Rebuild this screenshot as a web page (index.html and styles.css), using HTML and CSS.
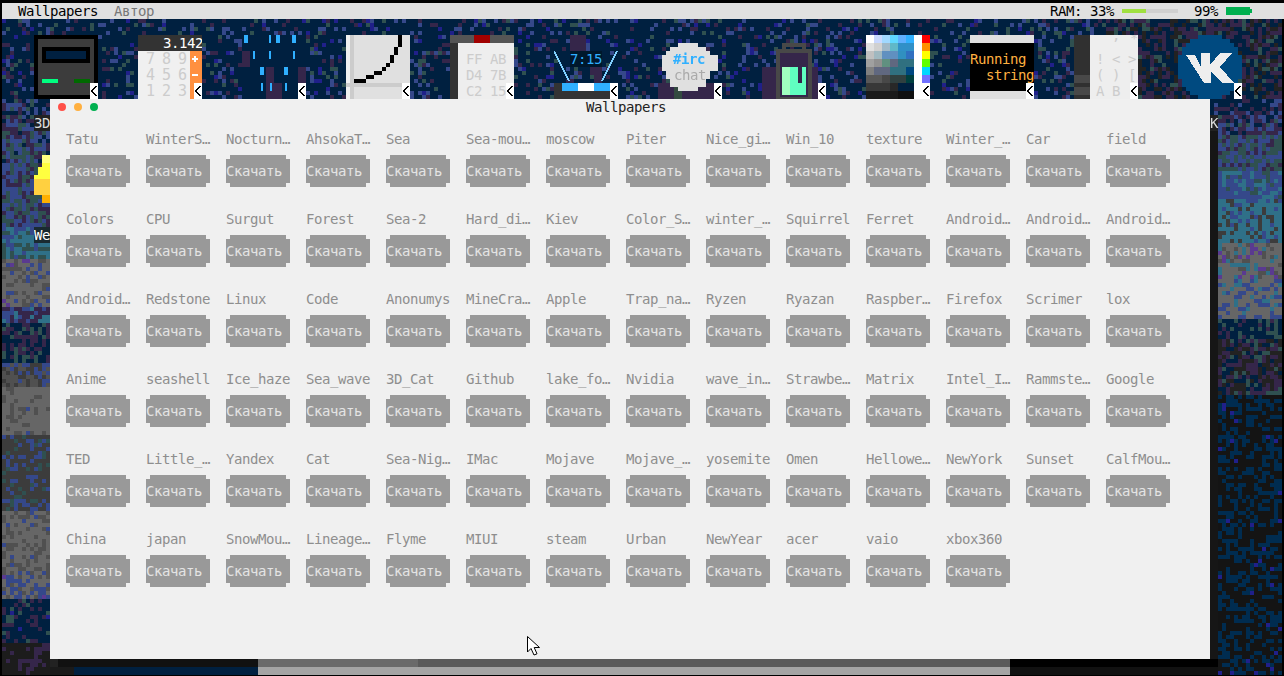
FILE: index.html
```html
<!DOCTYPE html>
<html lang="en">

<head>
    <meta charset="UTF-8">
    <meta name="viewport" content="width=device-width, initial-scale=1.0">
    <title>Wallpapers</title>
    <link rel="stylesheet" href="styles.css">
</head>

<body>
    <canvas id="wall" class="wall" width="1284" height="676"></canvas>

    <svg class="defs" width="0" height="0">
        <symbol id="back" viewBox="0 0 8 16" width="8" height="16">
            <rect width="8" height="16" fill="#fff" />
            <path d="M6.5 3 L1.8 8 L6.5 13" fill="none" stroke="#000" stroke-width="1.6" />
        </symbol>
    </svg>

    <header class="menubar">
        <span class="menu-app">Wallpapers</span>
        <span class="menu-item">Автор</span>
        <div class="status">
            <span>RAM: 33%</span>
            <div class="ram-bar"><div class="ram-fill"></div></div>
            <span class="bat-text">99%</span>
            <div class="battery"></div>
        </div>
    </header>

    <main class="desktop">
        <div class="app">
            <svg class="icon" viewBox="0 0 64 64">
                <rect width="64" height="64" fill="#000" />
                <rect x="4" y="4" width="56" height="56" fill="#3c3c3c" />
                <rect x="8" y="12" width="48" height="16" fill="#000" />
                <rect x="12" y="16" width="40" height="8" fill="#002040" />
                <rect x="8" y="44" width="16" height="4" fill="#00ff80" />
                <rect x="40" y="44" width="16" height="4" fill="#006a00" />
                <use href="#back" x="56" y="48" />
            </svg>
            <span class="label">3D</span>
        </div>
        <div class="app">
            <svg class="icon" viewBox="0 0 64 64">
                <rect width="64" height="16" fill="#333" />
                <rect y="16" width="64" height="48" fill="#f0f0f0" />
                <rect x="52" y="16" width="12" height="48" fill="#ff9040" />
                <text class="svg-text" x="25" y="13" fill="#fff">3.142</text>
                <g class="svg-big" fill="#ccc">
                    <text x="8" y="29">7</text><text x="24" y="29">8</text><text x="40" y="29">9</text>
                    <text x="8" y="45">4</text><text x="24" y="45">5</text><text x="40" y="45">6</text>
                    <text x="8" y="61">1</text><text x="24" y="61">2</text><text x="40" y="61">3</text>
                </g>
                <rect x="54" y="23" width="6" height="2" fill="#fff" />
                <rect x="56" y="21" width="2" height="6" fill="#fff" />
                <rect x="54" y="39" width="6" height="2" fill="#fff" />
                <use href="#back" x="56" y="48" />
            </svg>
        </div>
        <div class="app">
            <svg class="icon" viewBox="0 0 64 64">
                <rect width="64" height="64" fill="#002040" />
                <g fill="#35264a">
                    <rect x="0" y="16" width="8" height="16" />
                    <rect x="24" y="32" width="8" height="32" />
                    <rect x="32" y="48" width="8" height="16" />
                    <rect x="56" y="32" width="8" height="16" />
                </g>
                <g fill="#30b0ff">
                    <rect x="2" y="0" width="4" height="8" /><rect x="27" y="0" width="2" height="8" />
                    <rect x="34" y="0" width="4" height="8" /><rect x="50" y="0" width="4" height="8" />
                    <rect x="11" y="16" width="2" height="8" /><rect x="27" y="16" width="2" height="8" />
                    <rect x="51" y="16" width="2" height="8" />
                    <rect x="18" y="32" width="4" height="8" /><rect x="42" y="32" width="4" height="8" />
                    <rect x="19" y="48" width="2" height="8" /><rect x="28" y="48" width="2" height="8" />
                    <rect x="43" y="48" width="2" height="8" />
                </g>
                <use href="#back" x="56" y="48" />
            </svg>
        </div>
        <div class="app">
            <svg class="icon" viewBox="0 0 64 64">
                <rect width="64" height="64" fill="#e0e0e0" />
                <rect width="4" height="64" fill="#f0f0f0" />
                <rect x="4" width="4" height="64" fill="#ccc" />
                <rect y="48" width="64" height="4" fill="#ccc" />
                <path fill="#000" d="M8 44h12v4h-12z M20 40h8v4h-8z M28 36h8v4h-8z M36 32h4v4h-4z M40 28h4v4h-4z M44 20h4v8h-4z M48 12h4v8h-4z M52 0h4v12h-4z" />
                <use href="#back" x="56" y="48" />
            </svg>
        </div>
        <div class="app">
            <svg class="icon" viewBox="0 0 64 64">
                <rect width="64" height="8" fill="#555" />
                <rect x="24" width="16" height="8" fill="#a00000" />
                <rect y="8" width="8" height="56" fill="#333" />
                <rect x="8" y="8" width="56" height="56" fill="#eee" />
                <g class="svg-text" fill="#ccc">
                    <text x="16" y="29">FF</text><text x="40" y="29">AB</text>
                    <text x="16" y="45">D4</text><text x="40" y="45">7B</text>
                    <text x="16" y="61">C2</text><text x="40" y="61">15</text>
                </g>
                <use href="#back" x="56" y="48" />
            </svg>
        </div>
        <div class="app">
            <svg class="icon" viewBox="0 0 64 64">
                <rect x="16" width="16" height="16" fill="#35264a" />
                <rect x="40" y="16" width="8" height="32" fill="#35264a" />
                <rect x="16" y="16" width="32" height="16" fill="#00182c" />
                <path d="M0 16 L15 46 M63 16 L48 46" fill="none" stroke="#80d0ff" stroke-width="1.5" />
                <text class="svg-text" x="16" y="29" fill="#30b0ff">7:15</text>
                <rect y="48" width="64" height="16" fill="#333" />
                <rect x="8" y="48" width="16" height="8" fill="#30b0ff" />
                <rect x="24" y="48" width="16" height="8" fill="#fff" />
                <rect x="40" y="48" width="16" height="8" fill="#30b0ff" />
                <use href="#back" x="56" y="48" />
            </svg>
        </div>
        <div class="app">
            <svg class="icon" viewBox="0 0 64 64">
                <rect y="48" width="64" height="16" fill="#35264a" />
                <rect x="16" y="52" width="8" height="12" fill="#334a40" />
                <path fill="#e0e0e0" d="M20 8H40V12H48V16H52V20H60V36H52V44H48V52H40V56H20V52H12V44H8V36H4V20H8V16H12V12H20Z" />
                <text class="svg-text svg-bold" x="15" y="29" fill="#30b0ff">#irc</text>
                <text class="svg-text" x="16" y="45" fill="#aaa">chat</text>
                <use href="#back" x="56" y="48" />
            </svg>
        </div>
        <div class="app">
            <svg class="icon" viewBox="0 0 64 64">
                <rect y="32" width="56" height="32" fill="#35264a" />
                <rect x="16" y="16" width="32" height="48" fill="#35264a" stroke="#484848" stroke-width="4" />
                <path d="M22 16 V10 H42 V16" fill="none" stroke="#484848" stroke-width="4" />
                <rect x="20" y="32" width="8" height="28" fill="#a0ffc0" />
                <rect x="28" y="32" width="16" height="28" fill="#60ffc0" />
                <rect x="36" y="32" width="4" height="16" fill="#35264a" />
                <use href="#back" x="56" y="48" />
            </svg>
        </div>
        <div class="app">
            <svg class="icon" viewBox="0 0 64 64">
                <rect width="64" height="64" fill="#fff" />
                <g>
                    <rect x="0" y="0" width="8" height="8" fill="#fff" /><rect x="8" y="0" width="8" height="8" fill="#c8d8ff" /><rect x="16" y="0" width="8" height="8" fill="#a0d8ff" /><rect x="24" y="0" width="8" height="8" fill="#60d8ff" /><rect x="32" y="0" width="8" height="8" fill="#60b0ff" /><rect x="40" y="0" width="8" height="8" fill="#30b0ff" />
                    <rect x="0" y="8" width="8" height="8" fill="#e0e0e0" /><rect x="8" y="8" width="8" height="8" fill="#d0d0d0" /><rect x="16" y="8" width="8" height="8" fill="#a0b8c8" /><rect x="24" y="8" width="8" height="8" fill="#60b8c8" /><rect x="32" y="8" width="16" height="8" fill="#3090c8" />
                    <rect x="0" y="16" width="8" height="8" fill="#c0c0c0" /><rect x="8" y="16" width="8" height="8" fill="#a0b8c0" /><rect x="16" y="16" width="16" height="8" fill="#6090c0" /><rect x="32" y="16" width="8" height="8" fill="#3090c0" /><rect x="40" y="16" width="8" height="8" fill="#3070c0" />
                    <rect x="0" y="24" width="8" height="8" fill="#a0a0a0" /><rect x="8" y="24" width="8" height="8" fill="#909090" /><rect x="16" y="24" width="8" height="8" fill="#609080" /><rect x="24" y="24" width="8" height="8" fill="#606880" /><rect x="32" y="24" width="16" height="8" fill="#307080" />
                    <rect x="0" y="32" width="8" height="8" fill="#808080" /><rect x="8" y="32" width="16" height="8" fill="#606880" /><rect x="24" y="32" width="16" height="8" fill="#307080" /><rect x="40" y="32" width="8" height="8" fill="#004880" />
                    <rect x="0" y="40" width="16" height="8" fill="#585858" /><rect x="16" y="40" width="8" height="8" fill="#484848" /><rect x="24" y="40" width="16" height="8" fill="#304040" /><rect x="40" y="40" width="8" height="8" fill="#004040" />
                    <rect x="0" y="48" width="24" height="8" fill="#383838" /><rect x="24" y="48" width="8" height="8" fill="#282828" /><rect x="32" y="48" width="16" height="8" fill="#002040" />
                    <rect x="0" y="56" width="32" height="8" fill="#1a1a1a" /><rect x="32" y="56" width="16" height="8" fill="#101010" />
                </g>
                <rect x="56" y="0" width="8" height="8" fill="#ff0000" />
                <rect x="56" y="8" width="8" height="8" fill="#ff9000" />
                <rect x="56" y="16" width="8" height="8" fill="#ffff00" />
                <rect x="56" y="24" width="8" height="8" fill="#60ff00" />
                <rect x="56" y="32" width="8" height="8" fill="#00d8ff" />
                <rect x="56" y="40" width="8" height="8" fill="#7070ff" />
                <use href="#back" x="56" y="48" />
            </svg>
        </div>
        <div class="app">
            <svg class="icon" viewBox="0 0 64 64">
                <rect width="64" height="64" fill="#e0e0e0" />
                <rect y="8" width="64" height="48" fill="#000" />
                <text class="svg-text" x="0" y="29" fill="#ffb040">Running</text>
                <text class="svg-text" x="16" y="45" fill="#ffb040">string</text>
                <use href="#back" x="56" y="48" />
            </svg>
        </div>
        <div class="app">
            <svg class="icon" viewBox="0 0 64 64">
                <rect width="16" height="64" fill="#303030" />
                <rect y="40" width="16" height="8" fill="#484848" />
                <rect y="52" width="16" height="8" fill="#484848" />
                <rect x="16" width="48" height="64" fill="#eee" />
                <g class="svg-text" fill="#ccc">
                    <text x="22" y="5">"</text><text x="38" y="5">,</text><text x="56" y="8">*</text>
                    <text x="22" y="29">!</text><text x="38" y="29">&lt;</text><text x="54" y="29">&gt;</text>
                    <text x="22" y="45">(</text><text x="38" y="45">)</text><text x="54" y="45">[</text>
                    <text x="22" y="61">A</text><text x="38" y="61">B</text>
                </g>
                <use href="#back" x="56" y="48" />
            </svg>
        </div>
        <div class="app app-right">
            <svg class="icon" viewBox="0 0 64 64">
                <path fill="#004a80" d="M20 0h24v4h8v4h4v4h4v8h4v24h-4v8h-4v4h-4v4h-8v4h-24v-4h-8v-4h-4v-4h-4v-8h-4v-24h4v-8h4v-4h4v-4h8z" />
                <path fill="#eee" d="M8 20h9l6 12v-14h9v12l10-12h12l-12 14 14 16h-12l-11-12v12h-7l-18-28z" />
                <use href="#back" x="56" y="48" />
            </svg>
            <span class="label">VK</span>
        </div>
        <div class="app">
            <svg class="icon" viewBox="0 0 64 64">
                <path fill="#ffff40" d="M8 8h48v4h4v12h4v16h-64v-20h4v-8h4z" />
                <rect x="8" width="48" height="8" fill="#ffff80" />
                <rect y="24" width="64" height="16" fill="#ffd040" />
                <rect x="8" y="40" width="48" height="8" fill="#ffb000" />
            </svg>
            <span class="label label-plain">We</span>
        </div>
    </main>

    <section class="window">
        <div class="titlebar">
            <div class="lights">
                <span class="light light-red"></span>
                <span class="light light-yellow"></span>
                <span class="light light-green"></span>
            </div>
            <span class="title">Wallpapers</span>
        </div>
        <div class="list">
            <div class="item"><span class="name">Tatu</span><button class="dl">Скачать</button></div>
            <div class="item"><span class="name">WinterS…</span><button class="dl">Скачать</button></div>
            <div class="item"><span class="name">Nocturn…</span><button class="dl">Скачать</button></div>
            <div class="item"><span class="name">AhsokaT…</span><button class="dl">Скачать</button></div>
            <div class="item"><span class="name">Sea</span><button class="dl">Скачать</button></div>
            <div class="item"><span class="name">Sea-mou…</span><button class="dl">Скачать</button></div>
            <div class="item"><span class="name">moscow</span><button class="dl">Скачать</button></div>
            <div class="item"><span class="name">Piter</span><button class="dl">Скачать</button></div>
            <div class="item"><span class="name">Nice_gi…</span><button class="dl">Скачать</button></div>
            <div class="item"><span class="name">Win_10</span><button class="dl">Скачать</button></div>
            <div class="item"><span class="name">texture</span><button class="dl">Скачать</button></div>
            <div class="item"><span class="name">Winter_…</span><button class="dl">Скачать</button></div>
            <div class="item"><span class="name">Car</span><button class="dl">Скачать</button></div>
            <div class="item"><span class="name">field</span><button class="dl">Скачать</button></div>

            <div class="item"><span class="name">Colors</span><button class="dl">Скачать</button></div>
            <div class="item"><span class="name">CPU</span><button class="dl">Скачать</button></div>
            <div class="item"><span class="name">Surgut</span><button class="dl">Скачать</button></div>
            <div class="item"><span class="name">Forest</span><button class="dl">Скачать</button></div>
            <div class="item"><span class="name">Sea-2</span><button class="dl">Скачать</button></div>
            <div class="item"><span class="name">Hard_di…</span><button class="dl">Скачать</button></div>
            <div class="item"><span class="name">Kiev</span><button class="dl">Скачать</button></div>
            <div class="item"><span class="name">Color_S…</span><button class="dl">Скачать</button></div>
            <div class="item"><span class="name">winter_…</span><button class="dl">Скачать</button></div>
            <div class="item"><span class="name">Squirrel</span><button class="dl">Скачать</button></div>
            <div class="item"><span class="name">Ferret</span><button class="dl">Скачать</button></div>
            <div class="item"><span class="name">Android…</span><button class="dl">Скачать</button></div>
            <div class="item"><span class="name">Android…</span><button class="dl">Скачать</button></div>
            <div class="item"><span class="name">Android…</span><button class="dl">Скачать</button></div>

            <div class="item"><span class="name">Android…</span><button class="dl">Скачать</button></div>
            <div class="item"><span class="name">Redstone</span><button class="dl">Скачать</button></div>
            <div class="item"><span class="name">Linux</span><button class="dl">Скачать</button></div>
            <div class="item"><span class="name">Code</span><button class="dl">Скачать</button></div>
            <div class="item"><span class="name">Anonumys</span><button class="dl">Скачать</button></div>
            <div class="item"><span class="name">MineCra…</span><button class="dl">Скачать</button></div>
            <div class="item"><span class="name">Apple</span><button class="dl">Скачать</button></div>
            <div class="item"><span class="name">Trap_na…</span><button class="dl">Скачать</button></div>
            <div class="item"><span class="name">Ryzen</span><button class="dl">Скачать</button></div>
            <div class="item"><span class="name">Ryazan</span><button class="dl">Скачать</button></div>
            <div class="item"><span class="name">Raspber…</span><button class="dl">Скачать</button></div>
            <div class="item"><span class="name">Firefox</span><button class="dl">Скачать</button></div>
            <div class="item"><span class="name">Scrimer</span><button class="dl">Скачать</button></div>
            <div class="item"><span class="name">lox</span><button class="dl">Скачать</button></div>

            <div class="item"><span class="name">Anime</span><button class="dl">Скачать</button></div>
            <div class="item"><span class="name">seashell</span><button class="dl">Скачать</button></div>
            <div class="item"><span class="name">Ice_haze</span><button class="dl">Скачать</button></div>
            <div class="item"><span class="name">Sea_wave</span><button class="dl">Скачать</button></div>
            <div class="item"><span class="name">3D_Cat</span><button class="dl">Скачать</button></div>
            <div class="item"><span class="name">Github</span><button class="dl">Скачать</button></div>
            <div class="item"><span class="name">lake_fo…</span><button class="dl">Скачать</button></div>
            <div class="item"><span class="name">Nvidia</span><button class="dl">Скачать</button></div>
            <div class="item"><span class="name">wave_in…</span><button class="dl">Скачать</button></div>
            <div class="item"><span class="name">Strawbe…</span><button class="dl">Скачать</button></div>
            <div class="item"><span class="name">Matrix</span><button class="dl">Скачать</button></div>
            <div class="item"><span class="name">Intel_I…</span><button class="dl">Скачать</button></div>
            <div class="item"><span class="name">Rammste…</span><button class="dl">Скачать</button></div>
            <div class="item"><span class="name">Google</span><button class="dl">Скачать</button></div>

            <div class="item"><span class="name">TED</span><button class="dl">Скачать</button></div>
            <div class="item"><span class="name">Little_…</span><button class="dl">Скачать</button></div>
            <div class="item"><span class="name">Yandex</span><button class="dl">Скачать</button></div>
            <div class="item"><span class="name">Cat</span><button class="dl">Скачать</button></div>
            <div class="item"><span class="name">Sea-Nig…</span><button class="dl">Скачать</button></div>
            <div class="item"><span class="name">IMac</span><button class="dl">Скачать</button></div>
            <div class="item"><span class="name">Mojave</span><button class="dl">Скачать</button></div>
            <div class="item"><span class="name">Mojave_…</span><button class="dl">Скачать</button></div>
            <div class="item"><span class="name">yosemite</span><button class="dl">Скачать</button></div>
            <div class="item"><span class="name">Omen</span><button class="dl">Скачать</button></div>
            <div class="item"><span class="name">Hellowe…</span><button class="dl">Скачать</button></div>
            <div class="item"><span class="name">NewYork</span><button class="dl">Скачать</button></div>
            <div class="item"><span class="name">Sunset</span><button class="dl">Скачать</button></div>
            <div class="item"><span class="name">CalfMou…</span><button class="dl">Скачать</button></div>

            <div class="item"><span class="name">China</span><button class="dl">Скачать</button></div>
            <div class="item"><span class="name">japan</span><button class="dl">Скачать</button></div>
            <div class="item"><span class="name">SnowMou…</span><button class="dl">Скачать</button></div>
            <div class="item"><span class="name">Lineage…</span><button class="dl">Скачать</button></div>
            <div class="item"><span class="name">Flyme</span><button class="dl">Скачать</button></div>
            <div class="item"><span class="name">MIUI</span><button class="dl">Скачать</button></div>
            <div class="item"><span class="name">steam</span><button class="dl">Скачать</button></div>
            <div class="item"><span class="name">Urban</span><button class="dl">Скачать</button></div>
            <div class="item"><span class="name">NewYear</span><button class="dl">Скачать</button></div>
            <div class="item"><span class="name">acer</span><button class="dl">Скачать</button></div>
            <div class="item"><span class="name">vaio</span><button class="dl">Скачать</button></div>
            <div class="item"><span class="name">xbox360</span><button class="dl">Скачать</button></div>
        </div>
    </section>

    <svg class="cursor" width="14" height="20" viewBox="0 0 14 20">
        <path d="M0.5 0.5 V16 L4 12.5 L7 19 L10 17.8 L7.2 11.5 H12.5 Z" fill="#fff" stroke="#000" stroke-width="1" />
    </svg>

    <script src="wall.js"></script>
</body>

</html>
```

FILE: styles.css
```css
html,
body {
    margin: 0;
    height: 100%;
}

body {
    position: relative;
    width: 1284px;
    height: 676px;
    overflow: hidden;
    background-color: #000;
    font-family: "DejaVu Sans Mono", "Liberation Mono", monospace;
    font-size: 14px;
    letter-spacing: -0.43px;
    line-height: 16px;
}

.wall {
    position: absolute;
    left: 0;
    top: 0;
}

.defs {
    position: absolute;
}

.menubar {
    position: relative;
    display: flex;
    gap: 16px;
    height: 16px;
    margin: 3px 0 0 2px;
    padding-left: 16px;
    background-color: #e0e0e0;
    color: #000;
}

.menu-item {
    color: #777;
}

.status {
    display: flex;
    align-items: center;
    margin-left: auto;
    margin-right: 29px;
}

.ram-bar {
    width: 56px;
    height: 4px;
    margin-left: 8px;
    background-color: #d0d0d0;
}

.ram-fill {
    width: 24px;
    height: 4px;
    background-color: #a0e040;
}

.bat-text {
    margin-left: 16px;
}

.battery {
    width: 24px;
    height: 8px;
    margin-left: 8px;
    margin-right: 5px;
    background-color: #00b050;
    box-shadow: 4px 0 0 -2px #00b050;
}

.desktop {
    position: relative;
    display: grid;
    grid-template-columns: repeat(12, 64px);
    grid-auto-rows: 80px;
    column-gap: 40px;
    row-gap: 40px;
    padding: 16px 0 0 34px;
}

.app {
    display: flex;
    flex-direction: column;
    align-items: flex-start;
    width: 64px;
}

.app-right {
    align-items: center;
}

.icon {
    display: block;
    width: 64px;
    height: 64px;
    flex: none;
    shape-rendering: crispEdges;
}

.svg-text {
    font-family: "DejaVu Sans Mono", monospace;
    font-size: 14px;
    letter-spacing: -0.43px;
}

.svg-big {
    font-family: "DejaVu Sans Mono", monospace;
    font-size: 15px;
}

.svg-bold {
    font-weight: bold;
}

.label {
    margin-top: 16px;
    background-color: #222;
    color: #ddd;
}

.label-plain {
    margin-top: 8px;
    background-color: #1a2a30;
    color: #fff;
}

.window {
    position: absolute;
    left: 50px;
    top: 99px;
    width: 1160px;
    height: 560px;
    background-color: #f0f0f0;
}

.titlebar {
    position: relative;
    height: 16px;
    padding-right: 8px;
    text-align: center;
    color: #222;
}

.lights {
    position: absolute;
    left: 8px;
    top: 4px;
    display: flex;
    gap: 8px;
}

.light {
    width: 8px;
    height: 8px;
    border-radius: 50%;
}

.light-red {
    background-color: #ff5048;
}

.light-yellow {
    background-color: #ffb040;
}

.light-green {
    background-color: #00b050;
}

.list {
    display: grid;
    grid-template-columns: repeat(14, 64px);
    column-gap: 16px;
    row-gap: 24px;
    padding: 16px 0 0 16px;
}

.item {
    display: flex;
    flex-direction: column;
    gap: 8px;
}

.name {
    height: 16px;
    white-space: nowrap;
    color: #8e8e8e;
}

.dl {
    width: 64px;
    height: 32px;
    padding: 0;
    border: none;
    background-color: #999;
    color: #e4e4e4;
    font: inherit;
    letter-spacing: inherit;
    text-align: left;
    clip-path: polygon(4px 0, 60px 0, 60px 4px, 64px 4px, 64px 28px, 60px 28px, 60px 32px, 4px 32px, 4px 28px, 0 28px, 0 4px, 4px 4px);
}

.cursor {
    position: absolute;
    left: 527px;
    top: 636px;
}
```

FILE: wall.js
```js
// pixel noise wallpaper, 4px cells, fixed seed so it is the same every load
const canvas = document.getElementById("wall");
const ctx = canvas.getContext("2d");

const NAVY = "#002040", PLUM = "#35264a", BLUE = "#35488a", GREEN = "#2f5050";
const TEAL = "#2f7088", GRAY = "#666666", DGRAY = "#3c3c3c", DARK = "#141414";
const DEEP = "#002c50", VIOLET = "#5a3a90", INDIGO = "#20208a", MID = "#505050";

let seed = 20240;
function rnd() {
    seed = (seed * 1664525 + 1013904223) % 4294967296;
    return seed / 4294967296;
}

function pick(list) {
    let r = rnd();
    for (const [color, weight] of list) {
        if (r < weight) return color;
        r -= weight;
    }
    return list[0][0];
}

const upper = [[NAVY, 0.72], [BLUE, 0.1], [PLUM, 0.08], [GREEN, 0.06], [INDIGO, 0.04]];
const upperRight = [[NAVY, 0.35], [PLUM, 0.3], ["#222222", 0.25], [GREEN, 0.1]];

const leftSide = [
    [115, [[NAVY, 0.4], [PLUM, 0.3], [BLUE, 0.2], [GREEN, 0.1]]],
    [160, [[PLUM, 0.3], [BLUE, 0.3], [GREEN, 0.3], [NAVY, 0.1]]],
    [225, [[BLUE, 0.4], [GREEN, 0.35], [PLUM, 0.25]]],
    [258, [[TEAL, 0.5], [BLUE, 0.25], [GREEN, 0.25]]],
    [307, [[GRAY, 0.55], [MID, 0.25], [BLUE, 0.15], [VIOLET, 0.05]]],
    [320, [[PLUM, 0.5], [BLUE, 0.4], [TEAL, 0.1]]],
    [360, [[NAVY, 0.5], [PLUM, 0.3], [GREEN, 0.2]]],
    [385, [[MID, 0.45], [DGRAY, 0.3], [BLUE, 0.25]]],
    [432, [[GRAY, 0.8], [MID, 0.17], [BLUE, 0.03]]],
    [510, [[DGRAY, 0.6], [BLUE, 0.25], [GREEN, 0.15]]],
    [572, [[GRAY, 0.62], [MID, 0.35], [BLUE, 0.03]]],
    [596, [[GRAY, 0.4], [MID, 0.2], [BLUE, 0.35], [VIOLET, 0.05]]],
    [640, [[NAVY, 0.62], [PLUM, 0.25], [GREEN, 0.1], [INDIGO, 0.03]]],
    [676, [["#1c1c1c", 0.7], [PLUM, 0.3]]]
];

const rightSide = [
    [113, [[NAVY, 0.6], [PLUM, 0.25], [BLUE, 0.15]]],
    [133, [[PLUM, 0.35], [BLUE, 0.3], [NAVY, 0.2], [GREEN, 0.15]]],
    [170, [[GREEN, 0.45], [BLUE, 0.4], [PLUM, 0.15]]],
    [197, [[BLUE, 0.6], [TEAL, 0.3], [GREEN, 0.1]]],
    [243, [[TEAL, 0.6], [DGRAY, 0.25], [BLUE, 0.15]]],
    [277, [[GRAY, 0.55], [TEAL, 0.2], [VIOLET, 0.1], [MID, 0.15]]],
    [317, [[GRAY, 0.6], [BLUE, 0.3], [TEAL, 0.1]]],
    [337, [[NAVY, 0.55], [GREEN, 0.3], [PLUM, 0.15]]],
    [395, [[PLUM, 0.35], ["#222222", 0.35], [NAVY, 0.2], [GREEN, 0.1]]],
    [676, [[DARK, 0.55], [DEEP, 0.43], [INDIGO, 0.02]]]
];

function band(list, y) {
    for (const [end, colors] of list) {
        if (y < end) return colors;
    }
    return list[list.length - 1][1];
}

for (let y = 3; y < 676; y += 4) {
    for (let x = 2; x < 1284; x += 4) {
        let colors;
        if (y < 99) colors = x > 1100 ? upperRight : upper;
        else if (x < 640) colors = band(leftSide, y);
        else colors = band(rightSide, y);
        ctx.fillStyle = pick(colors);
        ctx.fillRect(x, y, 4, 4);
    }
}

// black frame edges
ctx.fillStyle = "#000";
ctx.fillRect(0, 0, 2, 676);
ctx.fillRect(1282, 0, 2, 676);
ctx.fillRect(0, 675, 1284, 1);

// dark column right of the window
ctx.fillStyle = "#161616";
ctx.fillRect(1210, 130, 8, 537);

// big blocks under the window
const blocks = [
    [50, 659, 8, 8, "#222222"], [58, 659, 200, 8, "#111111"],
    [258, 659, 160, 8, "#6a6a6a"], [418, 659, 592, 8, "#5a5a5a"],
    [1010, 659, 208, 8, "#000000"],
    [50, 667, 24, 8, "#1a1a1a"], [74, 667, 184, 8, "#002040"],
    [258, 667, 752, 8, "#a4a4a4"], [1010, 667, 208, 8, "#111111"]
];
blocks.forEach(b => {
    ctx.fillStyle = b[4];
    ctx.fillRect(b[0], b[1], b[2], b[3]);
});
```
